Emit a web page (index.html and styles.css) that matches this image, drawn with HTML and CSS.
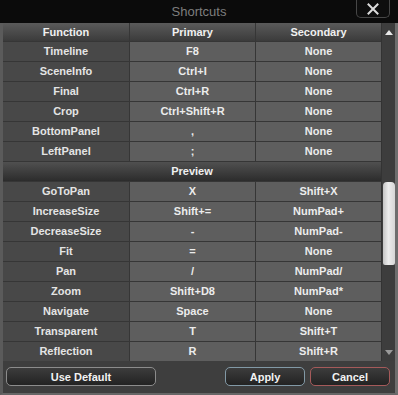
FILE: index.html
```html
<!DOCTYPE html>
<html>
<head>
    <title>Shortcuts</title>
    <link rel="stylesheet" href="styles.css">
</head>
<body>
    <div class="window">
        <!-- Title bar -->
        <div class="titlebar">
            <span></span>
            <div class="title">Shortcuts</div>
            <div class="close-wrap">
                <div class="close">
                    <svg width="14" height="14" viewBox="0 0 14 14">
                        <path d="M2.5 2.5 L11.5 11.5 M11.5 2.5 L2.5 11.5" stroke="#dcdcdc" stroke-width="2" stroke-linecap="square"/>
                    </svg>
                </div>
            </div>
        </div>

        <div class="frame">
            <div class="body">
                <div class="table">
                    <div class="row head"><div>Function</div><div>Primary</div><div>Secondary</div></div>
                    <div class="row"><div class="fn">Timeline</div><div>F8</div><div>None</div></div>
                    <div class="row"><div class="fn">SceneInfo</div><div>Ctrl+I</div><div>None</div></div>
                    <div class="row"><div class="fn">Final</div><div>Ctrl+R</div><div>None</div></div>
                    <div class="row"><div class="fn">Crop</div><div>Ctrl+Shift+R</div><div>None</div></div>
                    <div class="row"><div class="fn">BottomPanel</div><div>,</div><div>None</div></div>
                    <div class="row"><div class="fn">LeftPanel</div><div>;</div><div>None</div></div>
                    <div class="group">Preview</div>
                    <div class="row"><div class="fn">GoToPan</div><div>X</div><div>Shift+X</div></div>
                    <div class="row"><div class="fn">IncreaseSize</div><div>Shift+=</div><div>NumPad+</div></div>
                    <div class="row"><div class="fn">DecreaseSize</div><div>-</div><div>NumPad-</div></div>
                    <div class="row"><div class="fn">Fit</div><div>=</div><div>None</div></div>
                    <div class="row"><div class="fn">Pan</div><div>/</div><div>NumPad/</div></div>
                    <div class="row"><div class="fn">Zoom</div><div>Shift+D8</div><div>NumPad*</div></div>
                    <div class="row"><div class="fn">Navigate</div><div>Space</div><div>None</div></div>
                    <div class="row"><div class="fn">Transparent</div><div>T</div><div>Shift+T</div></div>
                    <div class="row"><div class="fn">Reflection</div><div>R</div><div>Shift+R</div></div>
                </div>

                <div class="scrollbar">
                    <div class="arrow up"><span class="tri-up"></span></div>
                    <div class="track"><div class="thumb"></div></div>
                    <div class="arrow down"><span class="tri-down"></span></div>
                </div>
            </div>

            <div class="footer">
                <button class="btn default">Use Default</button>
                <span class="spacer"></span>
                <button class="btn apply">Apply</button>
                <button class="btn cancel">Cancel</button>
            </div>
        </div>
    </div>
</body>
</html>
```

FILE: styles.css
```css
body {
    margin: 0;
    background: #3e3e3e;
    font-family: 'Liberation Sans', Arial, sans-serif;
}

.window {
    width: 398px;
    height: 395px;
    display: flex;
    flex-direction: column;
}

.titlebar {
    height: 23px;
    background: #0b0b0b;
    display: grid;
    grid-template-columns: 1fr auto 1fr;
    align-items: start;
}

.title {
    font-size: 13px;
    color: #7e7e7e;
    line-height: 23px;
}

.close-wrap {
    display: flex;
    justify-content: flex-end;
    padding-right: 8px;
}

.close {
    width: 32px;
    height: 17px;
    border: 1px solid #474747;
    border-top: none;
    border-radius: 0 0 5px 5px;
    background: #0e0e0e;
    display: flex;
    align-items: center;
    justify-content: center;
}

.frame {
    flex: 1;
    display: flex;
    flex-direction: column;
    border-left: 3px solid #5b5b5b;
    border-right: 3px solid #6e6e6e;
    border-bottom: 2px solid #666666;
    background: #3e3e3e;
}

.body {
    display: flex;
    gap: 1px;
    background: #333333;
}

.table {
    width: 378px;
    display: flex;
    flex-direction: column;
    gap: 1px;
    background: #363636;
}

.row {
    display: grid;
    grid-template-columns: 126px 125px 125px;
    gap: 1px;
    height: 19px;
}

.row div {
    background: #5e5e5e;
    color: #ececec;
    font-size: 11px;
    font-weight: bold;
    text-align: center;
    line-height: 19px;
    white-space: nowrap;
}

.row .fn {
    background: #484848;
    color: #e4e4e4;
}

.row.head {
    height: 18px;
}

.row.head div {
    background: linear-gradient(#5a5a5a, #3b3b3b);
    line-height: 18px;
    color: #f0f0f0;
}

.group {
    height: 19px;
    background: linear-gradient(#505050, #2c2c2c);
    color: #f0f0f0;
    font-size: 11px;
    font-weight: bold;
    text-align: center;
    line-height: 18px;
}

.scrollbar {
    width: 13px;
    display: flex;
    flex-direction: column;
    background: #3d3d3d;
}

.arrow {
    height: 18px;
    display: flex;
    align-items: center;
    justify-content: center;
}

.tri-up {
    width: 0;
    height: 0;
    border-left: 4px solid transparent;
    border-right: 4px solid transparent;
    border-bottom: 5px solid #e8e8e8;
}

.tri-down {
    width: 0;
    height: 0;
    border-left: 4px solid transparent;
    border-right: 4px solid transparent;
    border-top: 5px solid #9a9a9a;
}

.track {
    flex: 1;
    padding-left: 1px;
}

.thumb {
    margin-top: 141px;
    height: 83px;
    border-radius: 4px 4px 2px 2px;
    background: linear-gradient(90deg, #c4c4c4, #ececec 45%, #d6d6d6);
}

.footer {
    flex: 1;
    display: flex;
    align-items: flex-start;
    gap: 5px;
    padding: 6px 5px 0 3px;
}

.spacer {
    flex: 1;
}

.btn {
    height: 19px;
    padding: 0;
    border: 1px solid #8c8c8c;
    border-radius: 5px;
    background: linear-gradient(#3c3c3c, #232323);
    color: #f2f2f2;
    font-family: 'Liberation Sans', Arial, sans-serif;
    font-size: 11px;
    font-weight: bold;
}

.btn.default {
    width: 150px;
}

.btn.apply {
    width: 80px;
    border-color: #8299a6;
}

.btn.cancel {
    width: 80px;
    border-color: #a55a5a;
}
```
